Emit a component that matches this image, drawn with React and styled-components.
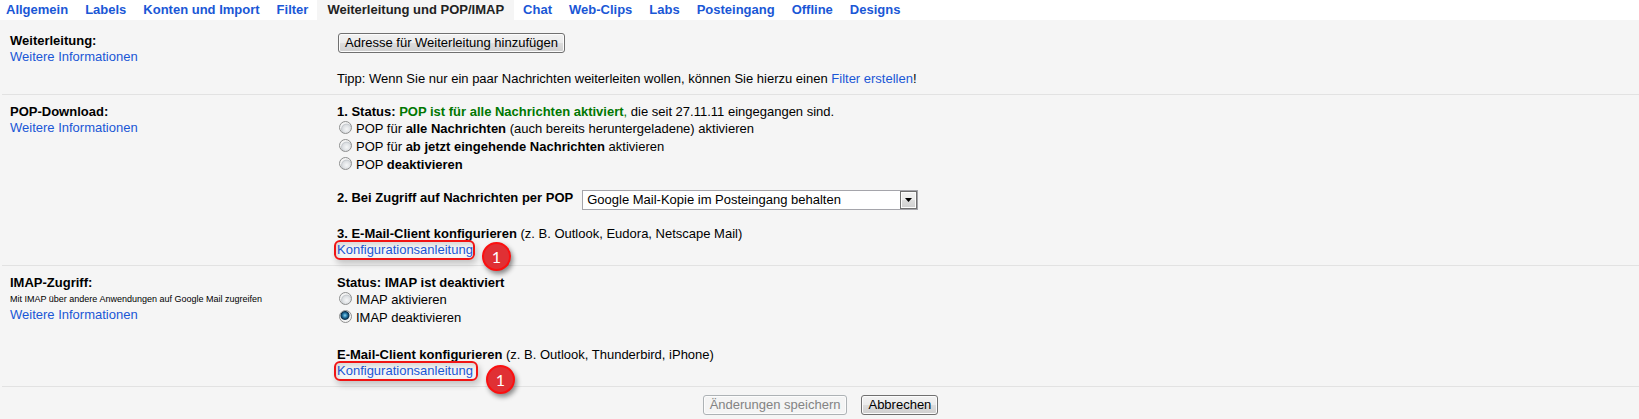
import { useState } from "react";
import styled, { createGlobalStyle } from "styled-components";

const tabs = [
  "Allgemein",
  "Labels",
  "Konten und Import",
  "Filter",
  "Weiterleitung und POP/IMAP",
  "Chat",
  "Web-Clips",
  "Labs",
  "Posteingang",
  "Offline",
  "Designs"
];

const App = () => {
  const [active, setActive] = useState("Weiterleitung und POP/IMAP");
  const [pop, setPop] = useState("");
  const [imap, setImap] = useState("off");

  return (
    <>
      <GlobalStyle />
      <Tabs>
        {tabs.map((tab) => (
          <Tab
            key={tab}
            href="#"
            $active={tab === active}
            onClick={(e) => {
              e.preventDefault();
              setActive(tab);
            }}
          >
            {tab}
          </Tab>
        ))}
      </Tabs>

      <Panel onSubmit={(e) => e.preventDefault()}>
        <Row>
          <div>
            <Title>Weiterleitung:</Title>
            <Link href="#">Weitere Informationen</Link>
          </div>
          <Content $gap={18}>
            <ButtonLine>
              <Button type="button">Adresse für Weiterleitung hinzufügen</Button>
            </ButtonLine>
            <p>
              Tipp: Wenn Sie nur ein paar Nachrichten weiterleiten wollen, können Sie hierzu einen{" "}
              <Link href="#">Filter erstellen</Link>!
            </p>
          </Content>
        </Row>

        <Row>
          <div>
            <Title>POP-Download:</Title>
            <Link href="#">Weitere Informationen</Link>
          </div>
          <Content $gap={16}>
            <div>
              <p>
                <b>
                  1. Status: <Green>POP ist für alle Nachrichten aktiviert</Green>
                </b>
                <Green>,</Green> die seit 27.11.11 eingegangen sind.
              </p>
              <Option htmlFor="pop-all">
                <Radio id="pop-all" name="pop" checked={pop === "all"} onChange={() => setPop("all")} />
                <span>
                  POP für <b>alle Nachrichten</b> (auch bereits heruntergeladene) aktivieren
                </span>
              </Option>
              <Option htmlFor="pop-new">
                <Radio id="pop-new" name="pop" checked={pop === "new"} onChange={() => setPop("new")} />
                <span>
                  POP für <b>ab jetzt eingehende Nachrichten</b> aktivieren
                </span>
              </Option>
              <Option htmlFor="pop-off">
                <Radio id="pop-off" name="pop" checked={pop === "off"} onChange={() => setPop("off")} />
                <span>
                  POP <b>deaktivieren</b>
                </span>
              </Option>
            </div>
            <SelectLine>
              <label htmlFor="popAction">
                <b>2. Bei Zugriff auf Nachrichten per POP</b>
              </label>
              <SelectBox>
                <select id="popAction">
                  <option>Google Mail-Kopie im Posteingang behalten</option>
                </select>
                <Arrow>
                  <svg width="7" height="4" viewBox="0 0 7 4">
                    <path d="M0 0h7L3.5 4z" />
                  </svg>
                </Arrow>
              </SelectBox>
            </SelectLine>
            <div>
              <p>
                <b>3. E-Mail-Client konfigurieren</b> (z. B. Outlook, Eudora, Netscape Mail)
              </p>
              <Marked>
                <Link href="#">Konfigurationsanleitung</Link>
                <Frame $width={141} />
                <Badge $left={145} $top={0}>1</Badge>
              </Marked>
            </div>
          </Content>
        </Row>

        <Row>
          <div>
            <Title>IMAP-Zugriff:</Title>
            <Small>Mit IMAP über andere Anwendungen auf Google Mail zugreifen</Small>
            <Link href="#">Weitere Informationen</Link>
          </div>
          <Content $gap={20}>
            <div>
              <p>
                <b>Status: IMAP ist deaktiviert</b>
              </p>
              <Option htmlFor="imap-on">
                <Radio id="imap-on" name="imap" checked={imap === "on"} onChange={() => setImap("on")} />
                <span>IMAP aktivieren</span>
              </Option>
              <Option htmlFor="imap-off">
                <Radio id="imap-off" name="imap" checked={imap === "off"} onChange={() => setImap("off")} />
                <span>IMAP deaktivieren</span>
              </Option>
            </div>
            <div>
              <p>
                <b>E-Mail-Client konfigurieren</b> (z. B. Outlook, Thunderbird, iPhone)
              </p>
              <Marked>
                <Link href="#">Konfigurationsanleitung</Link>
                <Frame $width={144} />
                <Badge $left={149} $top={2}>1</Badge>
              </Marked>
            </div>
          </Content>
        </Row>

        <Actions>
          <Button type="submit" disabled>Änderungen speichern</Button>
          <Button type="button">Abbrechen</Button>
        </Actions>
      </Panel>
    </>
  );
};

export default App;


const GlobalStyle = createGlobalStyle`
  * {
    box-sizing: border-box;
  }

  body {
    margin: 0;
    background: #f5f5f5;
    color: #000;
    font: 13px/16px "Liberation Sans", Arial, sans-serif;
  }

  p {
    margin: 0;
  }
`;

const Tabs = styled.nav`
  display: flex;
  gap: 1px;
  background: #fff;
`;

const Tab = styled.a`
  height: 20px;
  padding: 2px ${({ $active }) => ($active ? 10 : 8)}px;
  font-weight: bold;
  text-decoration: none;
  white-space: nowrap;
  color: ${({ $active }) => ($active ? "#222" : "#1a57d6")};
  background: ${({ $active }) => ($active ? "#f5f5f5" : "transparent")};

  &:first-child {
    padding-left: 6px;
  }
`;

const Panel = styled.form`
  padding: 4px 0 4px 2px;
`;

const Row = styled.section`
  display: grid;
  grid-template-columns: 327px 1fr;
  padding: 9px 8px 7px;
  border-bottom: 1px solid #e2e2e2;
`;

const Title = styled.h2`
  margin: 0;
  font-size: 13px;
  line-height: 16px;
`;

const Small = styled.p`
  font-size: 9px;
`;

const Content = styled.div`
  display: flex;
  flex-direction: column;
  gap: ${({ $gap }) => $gap}px;
`;

const Link = styled.a`
  color: #1a57d6;
  text-decoration: none;
`;

const Green = styled.span`
  color: #007700;
`;

const Option = styled.label`
  display: flex;
  gap: 4px;
  height: 18px;
  padding: 1px 2px;
`;

const Radio = styled.input.attrs({ type: "radio" })`
  appearance: none;
  flex: none;
  width: 13px;
  height: 13px;
  margin: 0;
  border: 1px solid #8e8f8f;
  border-radius: 50%;
  background: ${({ checked }) =>
    checked
      ? "radial-gradient(circle at 45% 40%, #8fd3ee 0, #2a7fae 2px, #0b2f4a 4px, #f4f4f4 5px)"
      : "radial-gradient(circle at 60% 65%, #f6f7f8 0, #dcdfe2 4px, #c6cace 5px, #f4f4f4 6px)"};
`;

const ButtonLine = styled.div`
  display: flex;
  padding-left: 1px;
`;

const Button = styled.button`
  height: 20px;
  padding: 0 6px;
  border: 1px solid #707070;
  border-radius: 3px;
  background: linear-gradient(#f2f2f2, #ebebeb 50%, #dddddd 50%, #cfcfcf);
  box-shadow: inset 0 0 0 1px #fcfcfc;
  color: #000;
  font: 13px/16px "Liberation Sans", Arial, sans-serif;

  &:disabled {
    border-color: #adb2b5;
    background: #f4f4f4;
    color: #838383;
  }
`;

const SelectLine = styled.div`
  display: flex;
  gap: 9px;
  height: 20px;
`;

const SelectBox = styled.div`
  position: relative;
  width: 336px;

  select {
    appearance: none;
    display: block;
    width: 100%;
    height: 20px;
    padding: 0 22px 0 4px;
    border: 1px solid #a5a5ab;
    border-radius: 0;
    background: #fff;
    color: #000;
    font: 13px/16px "Liberation Sans", Arial, sans-serif;
  }
`;

const Arrow = styled.span`
  position: absolute;
  top: 1px;
  right: 1px;
  display: flex;
  align-items: center;
  justify-content: center;
  width: 17px;
  height: 18px;
  border: 1px solid #707070;
  background: linear-gradient(#f2f2f2, #ebebeb 50%, #dddddd 50%, #cfcfcf);
  box-shadow: inset 0 0 0 1px #fcfcfc;
  pointer-events: none;
`;

const Marked = styled.div`
  position: relative;
`;

const Frame = styled.span`
  position: absolute;
  top: -2px;
  left: -3px;
  width: ${({ $width }) => $width}px;
  height: 20px;
  border: 2px solid #f01414;
  border-radius: 6px;
  box-shadow: 2px 4px 6px rgba(0, 0, 0, 0.2), inset 2px 3px 5px rgba(0, 0, 0, 0.12);
  pointer-events: none;
`;

const Badge = styled.span`
  position: absolute;
  top: ${({ $top }) => $top}px;
  left: ${({ $left }) => $left}px;
  z-index: 1;
  display: flex;
  align-items: center;
  justify-content: center;
  width: 29px;
  height: 29px;
  border: 2px solid #fb1010;
  border-radius: 50%;
  background: #e03034;
  box-shadow: 2px 3px 5px rgba(0, 0, 0, 0.45);
  color: #fff;
  font: 16px/20px Lato, sans-serif;
`;

const Actions = styled.div`
  display: flex;
  justify-content: center;
  gap: 14px;
  padding-top: 8px;
`;
